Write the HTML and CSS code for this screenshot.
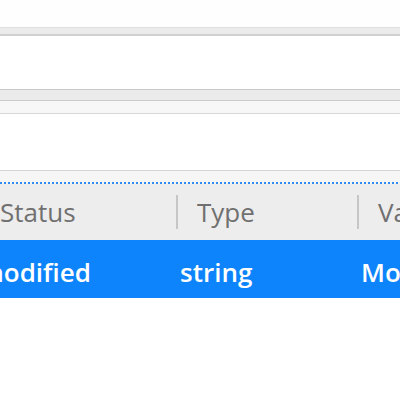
FILE: index.html
```html
<!DOCTYPE html>
<html>
<head>
<meta charset="utf-8">
<link rel="stylesheet" href="styles.css">
</head>
<body>
<div class="window">
  <div class="top-space"></div>
  <div class="toolbar-edge"></div>
  <div class="pane"></div>
  <div class="split">
    <div class="split-handle"></div>
    <div class="split-strip"></div>
  </div>
  <div class="pane pane-lower"></div>
  <div class="list">
    <div class="list-top"></div>
    <div class="focus-line"></div>
    <div class="header">
      <div class="col col-status">Status</div>
      <div class="col col-type">Type</div>
      <div class="col col-value">Value</div>
    </div>
    <div class="row selected">
      <div class="cell cell-status">modified</div>
      <div class="cell cell-type">string</div>
      <div class="cell cell-value">Modified</div>
    </div>
  </div>
</div>
</body>
</html>
```
FILE: styles.css
```css
html, body {
  margin: 0;
  padding: 0;
  background: #ffffff;
}
body {
  width: 400px;
  height: 400px;
  overflow: hidden;
  font-family: "Open Sans", "Noto Sans", sans-serif;
}
.window {
  display: flex;
  flex-direction: column;
}
.top-space {
  height: 27px;
  background: #fefefe;
}
.toolbar-edge {
  height: 6px;
  background: #ebebeb;
  border-top: 1px solid #e0e0e0;
  border-bottom: 2px solid #d0d0d0;
}
.pane {
  height: 53px;
  background: #ffffff;
}
.split {
  display: flex;
  flex-direction: column;
}
.split-handle {
  height: 10px;
  background: #ebebeb;
  border-top: 1px solid #c8c8c8;
  border-bottom: 1px solid #cbcbcb;
}
.split-strip {
  height: 12px;
  background: #f7f7f7;
  border-bottom: 1px solid #d8d8d8;
}
.pane-lower {
  height: 56px;
}
.list {
  display: flex;
  flex-direction: column;
}
.list-top {
  height: 11px;
  background: #f6f6f6;
  border-top: 1px solid #d4d4d4;
}
.focus-line {
  height: 2px;
  background: repeating-linear-gradient(to right, #2f8cf0 0 2px, transparent 2px 4px);
  background-color: #f4f4f4;
}
.header {
  display: grid;
  grid-template-columns: 197px 181px 200px;
  margin-left: -21px;
  height: 56px;
  background: #ededed;
  color: #707070;
  font-size: 26px;
  line-height: 56px;
}
.col {
  padding-left: 21px;
  white-space: nowrap;
}
.col-type, .col-value {
  display: flex;
  align-items: center;
  padding-left: 0;
  gap: 19px;
}
.col-type::before, .col-value::before {
  content: "";
  width: 2px;
  height: 34px;
  background: #c6c6c6;
  flex: none;
}
.row {
  display: grid;
  grid-template-columns: 197px 181px 200px;
  margin-left: -21px;
  height: 58px;
}
.selected {
  background: #0d84fb;
  color: #ffffff;
}
.cell {
  font-size: 26px;
  line-height: 58px;
  padding-top: 3px;
  padding-left: 4px;
  white-space: nowrap;
  font-weight: 600;
  box-sizing: border-box;
  height: 58px;
}
.cell-status {
  padding-left: 0;
}
```
